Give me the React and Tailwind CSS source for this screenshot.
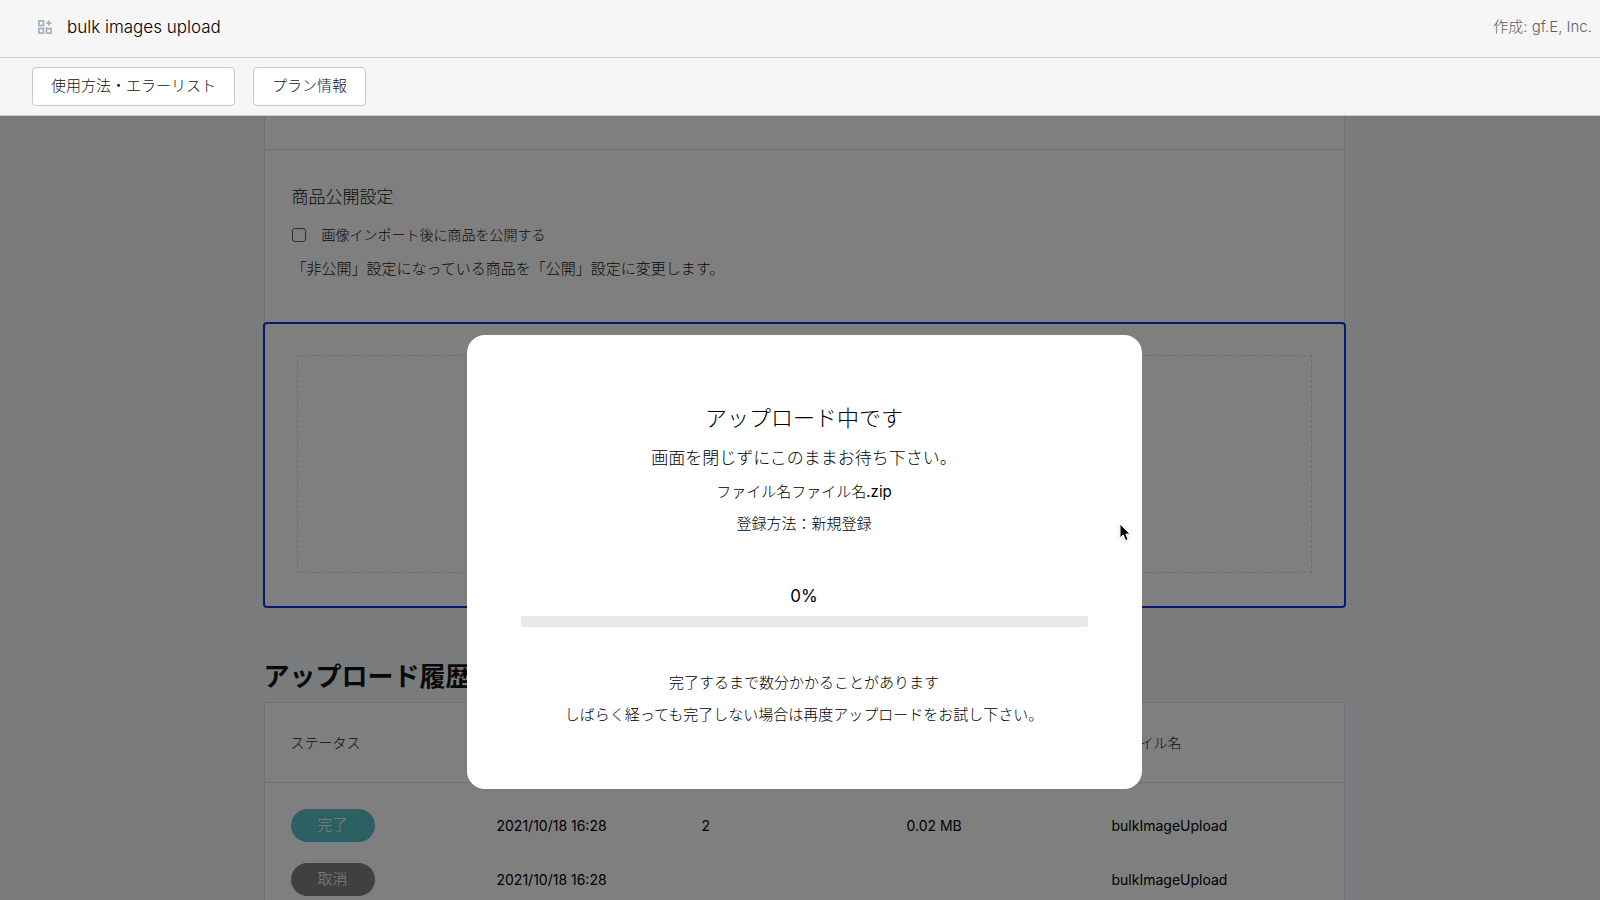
import React from 'react'

const uploads = [
  { id: 1, status: '完了', color: 'bg-[#5bc0c4]', date: '2021/10/18 16:28', count: '2', size: '0.02 MB', file: 'bulkImageUpload' },
  { id: 2, status: '取消', color: 'bg-[#808080]', date: '2021/10/18 16:28', count: '', size: '', file: 'bulkImageUpload' },
]

const AppIcon = () => (
  <svg className="w-4 h-4" viewBox="0 0 16 16" fill="none" stroke="#a3afbf" strokeWidth="1.7" aria-hidden="true">
    <rect x="1.9" y="1.9" width="4.6" height="4.6" />
    <rect x="1.9" y="9.5" width="4.6" height="4.6" />
    <rect x="9.5" y="9.5" width="4.6" height="4.6" />
    <path d="M11.8 1.6v5.2M9.2 4.2h5.2" />
  </svg>
)

const Header = () => (
  <header className="bg-[#f6f6f7]">
    <div className="flex items-center justify-between h-[58px] pl-[37px] pr-2 pb-1 border-b border-[#c9cccf]">
      <div className="flex items-center gap-[14px]">
        <AppIcon />
        <h1 className="text-[17px] leading-6 text-black">bulk images upload</h1>
      </div>
      <p className="text-[15px] leading-6 text-[#5c5f62]">作成: gf.E, Inc.</p>
    </div>
    <nav className="flex items-center gap-[18px] h-[58px] px-8 border-b border-[#c9cccf]">
      <button type="button" className="h-[39px] px-[18px] rounded bg-white border border-[#c4c8cc] text-[15px]">
        使用方法・エラーリスト
      </button>
      <button type="button" className="h-[39px] px-[18px] rounded bg-white border border-[#c4c8cc] text-[15px]">
        プラン情報
      </button>
    </nav>
  </header>
)

const UploadModal = () => (
  <div
    role="dialog"
    aria-modal="true"
    aria-labelledby="upload-title"
    className="relative w-[675px] rounded-[18px] bg-white px-[54px] pt-[65px] pb-[58px] text-center text-black"
  >
    <h2 id="upload-title" className="text-[22px] leading-9">アップロード中です</h2>
    <p className="mt-2 text-[17px] leading-7">画面を閉じずにこのままお待ち下さい。</p>
    <p className="mt-1 text-[15px] leading-8">ファイル名ファイル名<span className="font-normal">.zip</span></p>
    <p className="text-[15px] leading-8">登録方法：新規登録</p>

    <p className="mt-10 text-[17px] leading-8 font-normal">0%</p>
    <div role="progressbar" aria-valuenow={0} aria-valuemin={0} aria-valuemax={100} className="mt-1 h-[11px] rounded-[2px] bg-[#e6eaed]" />

    <p className="mt-10 text-[15px] leading-8">完了するまで数分かかることがあります</p>
    <p className="text-[15px] leading-8">しばらく経っても完了しない場合は再度アップロードをお試し下さい。</p>

    {/* Mouse pointer */}
    <svg className="absolute left-[651px] top-[187px] w-4 h-6 drop-shadow" viewBox="0 0 16 24" aria-hidden="true">
      <path d="M2 2v14l3.2-3 2.4 5.6 2.6-1.1-2.4-5.4h4.4z" fill="#000" stroke="#fff" strokeWidth="1" />
    </svg>
  </div>
)

export default function App() {
  return (
    <div className="h-screen flex flex-col overflow-hidden font-['Inter','Noto_Sans_CJK_JP',sans-serif] font-light text-[#111213]">
      <Header />

      <div className="relative flex-1 min-h-0 overflow-hidden bg-[#f4f6f8]">
        <main className="w-full max-w-[1081px] mx-auto translate-x-1">
          <section className="border-x border-[#e1e3e5] bg-white">
            <div className="h-[33px]" />
            <div className="border-t border-[#e1e3e5] px-[27px] pt-[33px] pb-[39px]">
              <h2 className="text-[17px] leading-7">商品公開設定</h2>
              <label className="mt-3 flex items-center gap-4 text-[14px] leading-6">
                <input type="checkbox" className="appearance-none w-[14px] h-[14px] rounded-[3px] border border-[#5c5f62] bg-white" />
                画像インポート後に商品を公開する
              </label>
              <p className="mt-2 text-[15px] leading-7">「非公開」設定になっている商品を「公開」設定に変更します。</p>
            </div>
          </section>

          <section className="-mx-px rounded border-2 border-[#0038d8] bg-white px-8 pt-[31px] pb-[33px]">
            <div className="h-[218px] border border-dashed border-[#d8dbde]" />
          </section>

          <h2 className="mt-[49px] text-[26px] leading-10 font-bold">アップロード履歴</h2>
          <section className="mt-[5px] border border-[#dfe3e8] bg-white">
            <table className="w-full table-fixed text-left text-[14px]">
              <colgroup>
                <col className="w-[21.5%]" />
                <col className="w-[19%]" />
                <col className="w-[19%]" />
                <col className="w-[19%]" />
                <col className="w-[21.5%]" />
              </colgroup>
              <thead>
                <tr className="h-[79px] border-b border-[#dfe3e8]">
                  <th className="pl-[26px] font-light">ステータス</th>
                  <th />
                  <th />
                  <th />
                  <th className="font-light">ファイル名</th>
                </tr>
              </thead>
              <tbody className="before:block before:h-4 font-normal text-black">
                {uploads.map((row) => (
                  <tr key={row.id} className="h-[54px]">
                    <td className="pl-[26px]">
                      <span className={`flex items-center justify-center w-[84px] h-[33px] rounded-full text-[15px] font-light text-white ${row.color}`}>
                        {row.status}
                      </span>
                    </td>
                    <td>{row.date}</td>
                    <td>{row.count}</td>
                    <td>{row.size}</td>
                    <td>{row.file}</td>
                  </tr>
                ))}
              </tbody>
            </table>
          </section>
        </main>

        <div className="absolute inset-0 flex items-center justify-center bg-black/50 pl-2 pt-[107px]">
          <UploadModal />
        </div>
      </div>
    </div>
  )
}
